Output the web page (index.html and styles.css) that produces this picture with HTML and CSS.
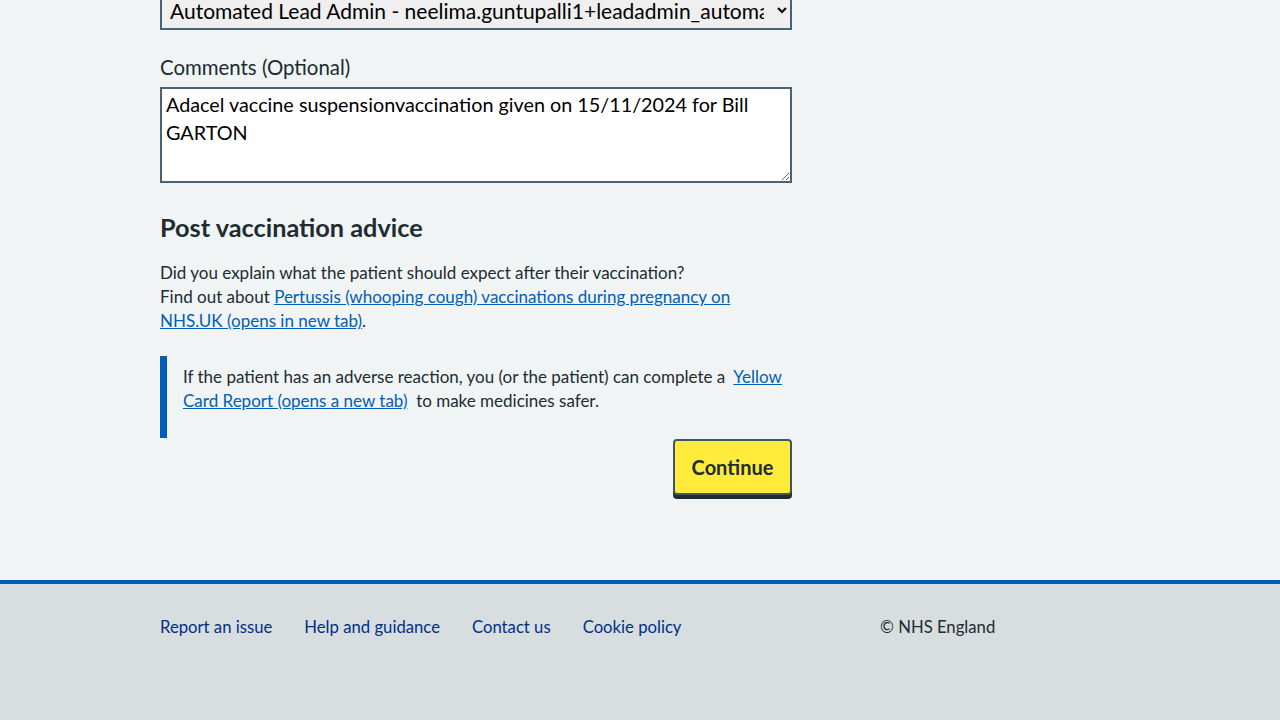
FILE: index.html
```html
<!DOCTYPE html>
<html lang="en">
<head>
<meta charset="utf-8">
<title>Post vaccination advice</title>
<link rel="stylesheet" href="styles.css">
</head>
<body>
<main class="container">
  <div class="column">
    <div class="form-group select-group">
      <select class="select">
        <option>Automated Lead Admin - neelima.guntupalli1+leadadmin_automation@nhs.net</option>
      </select>
    </div>
    <div class="form-group">
      <label class="label" for="comments">Comments (Optional)</label>
      <textarea class="textarea" id="comments" rows="3">Adacel vaccine suspensionvaccination given on 15/11/2024 for Bill GARTON</textarea>
    </div>
    <h2 class="heading">Post vaccination advice</h2>
    <p class="body-text">Did you explain what the patient should expect after their vaccination?<br>Find out about <a href="#" class="link">Pertussis (whooping cough) vaccinations during pregnancy on NHS.UK (opens in new tab)</a>.</p>
    <div class="inset">
      <p>If the patient has an adverse reaction, you (or the patient) can complete a &nbsp;<a href="#" class="link">Yellow Card Report (opens a new tab)</a>&nbsp; to make medicines safer.</p>
    </div>
    <div class="actions">
      <button class="button" type="button">Continue</button>
    </div>
  </div>
</main>
<footer class="footer">
  <div class="footer-inner">
    <ul class="footer-list">
      <li><a href="#">Report an issue</a></li>
      <li><a href="#">Help and guidance</a></li>
      <li><a href="#">Contact us</a></li>
      <li><a href="#">Cookie policy</a></li>
    </ul>
    <p class="copyright">© NHS England</p>
  </div>
</footer>
</body>
</html>
```
FILE: styles.css
```css
* { box-sizing: border-box; }
html, body { margin: 0; padding: 0; }
body {
  background: #f0f4f5;
  color: #212b32;
  font-family: Lato, "Liberation Sans", sans-serif;
  height: 720px;
  overflow: hidden;
}
.container {
  display: flow-root;
  width: 960px;
  margin: 0 auto;
  height: 580px;
}
.column {
  width: 632px;
  margin-top: -10px;
}
.form-group { margin-bottom: 24px; }
.select-group { margin-bottom: 23px; }
.select {
  display: block;
  width: 100%;
  height: 40px;
  border: 2px solid #4c6272;
  background-color: #efefef;
  color: #000;
  font-family: inherit;
  font-size: 21px;
  padding: 0 10px 0 4px;
  border-radius: 0;
}
.label {
  display: block;
  font-size: 20.4px;
  line-height: 28px;
  margin-bottom: 6px;
}
.textarea {
  display: block;
  width: 100%;
  height: 96px;
  border: 2px solid #4c6272;
  background: #fff;
  color: #000;
  font-family: inherit;
  font-size: 19.8px;
  line-height: 28px;
  padding: 1px 4px;
  border-radius: 0;
}
.heading {
  font-size: 25.3px;
  line-height: 32px;
  font-weight: 700;
  margin: 28px 0 18px;
}
.body-text {
  font-size: 17px;
  line-height: 24px;
  margin: 0 0 23px;
}
.link { color: #005eb8; text-decoration: underline; }
.inset {
  border-left: 7px solid #005eb8;
  padding: 9px 0 25px 16px;
}
.inset p {
  margin: 0;
  font-size: 17px;
  line-height: 24px;
}
.actions {
  display: flex;
  justify-content: flex-end;
  padding-top: 1px;
}
.button {
  background: #ffeb3b;
  color: #212b32;
  border: 2px solid #425563;
  border-radius: 4px;
  box-shadow: 0 4px 0 #212b32;
  font-family: inherit;
  font-size: 20px;
  font-weight: 700;
  line-height: 24px;
  padding: 12px 8px;
  width: 119px;
  height: 56px;
  cursor: pointer;
}
.footer {
  border-top: 4px solid #005eb8;
  background: #d8dde0;
  height: 140px;
}
.footer-inner {
  width: 960px;
  margin: 0 auto;
  display: flex;
  padding-top: 31px;
}
.footer-list {
  list-style: none;
  margin: 0;
  padding: 0;
  width: 720px;
  display: flex;
  gap: 32px;
}
.footer-list a {
  color: #003087;
  text-decoration: none;
  font-size: 16.7px;
  line-height: 24px;
}
.copyright {
  margin: 0;
  font-size: 16.7px;
  line-height: 24px;
}
```
